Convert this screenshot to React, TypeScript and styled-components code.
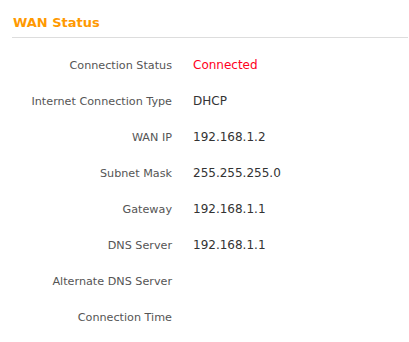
import styled, { createGlobalStyle } from "styled-components";

const GlobalStyle = createGlobalStyle`
  body {
    margin: 0;
    background: #fff;
    font-family: "DejaVu Sans", Verdana, sans-serif;
  }
`;

const rows: { label: string; value: string; alert?: boolean }[] = [
  { label: "Connection Status", value: "Connected", alert: true },
  { label: "Internet Connection Type", value: "DHCP" },
  { label: "WAN IP", value: "192.168.1.2" },
  { label: "Subnet Mask", value: "255.255.255.0" },
  { label: "Gateway", value: "192.168.1.1" },
  { label: "DNS Server", value: "192.168.1.1" },
  { label: "Alternate DNS Server", value: "" },
  { label: "Connection Time", value: "" },
];

export default function App() {
  return (
    <Page>
      <GlobalStyle />
      <Title>WAN Status</Title>
      <InfoGrid>
        {rows.map((r) => (
          <Row key={r.label}>
            <Label>{r.label}</Label>
            <Value $alert={r.alert}>{r.value}</Value>
          </Row>
        ))}
      </InfoGrid>
    </Page>
  );
}

const Page = styled.div`
  padding: 15px 1px 0 12px;
`;

const Title = styled.h2`
  margin: 0;
  padding: 0 0 0 1px;
  height: 22px;
  line-height: 16px;
  font-size: 13px;
  font-weight: bold;
  color: #ff9900;
  border-bottom: 1px solid #dddddd;
`;

const InfoGrid = styled.div`
  display: flex;
  flex-direction: column;
  padding-top: 9px;
`;

const Row = styled.div`
  display: grid;
  grid-template-columns: 160px 1fr;
  column-gap: 21px;
  height: 36px;
  align-items: center;
  font-size: 11.2px;
`;

const Label = styled.div`
  text-align: right;
  color: #555555;
`;

const Value = styled.div<{ $alert?: boolean }>`
  color: ${(p) => (p.$alert ? "#ff0022" : "#333333")};
  font-size: 12px;
`;
